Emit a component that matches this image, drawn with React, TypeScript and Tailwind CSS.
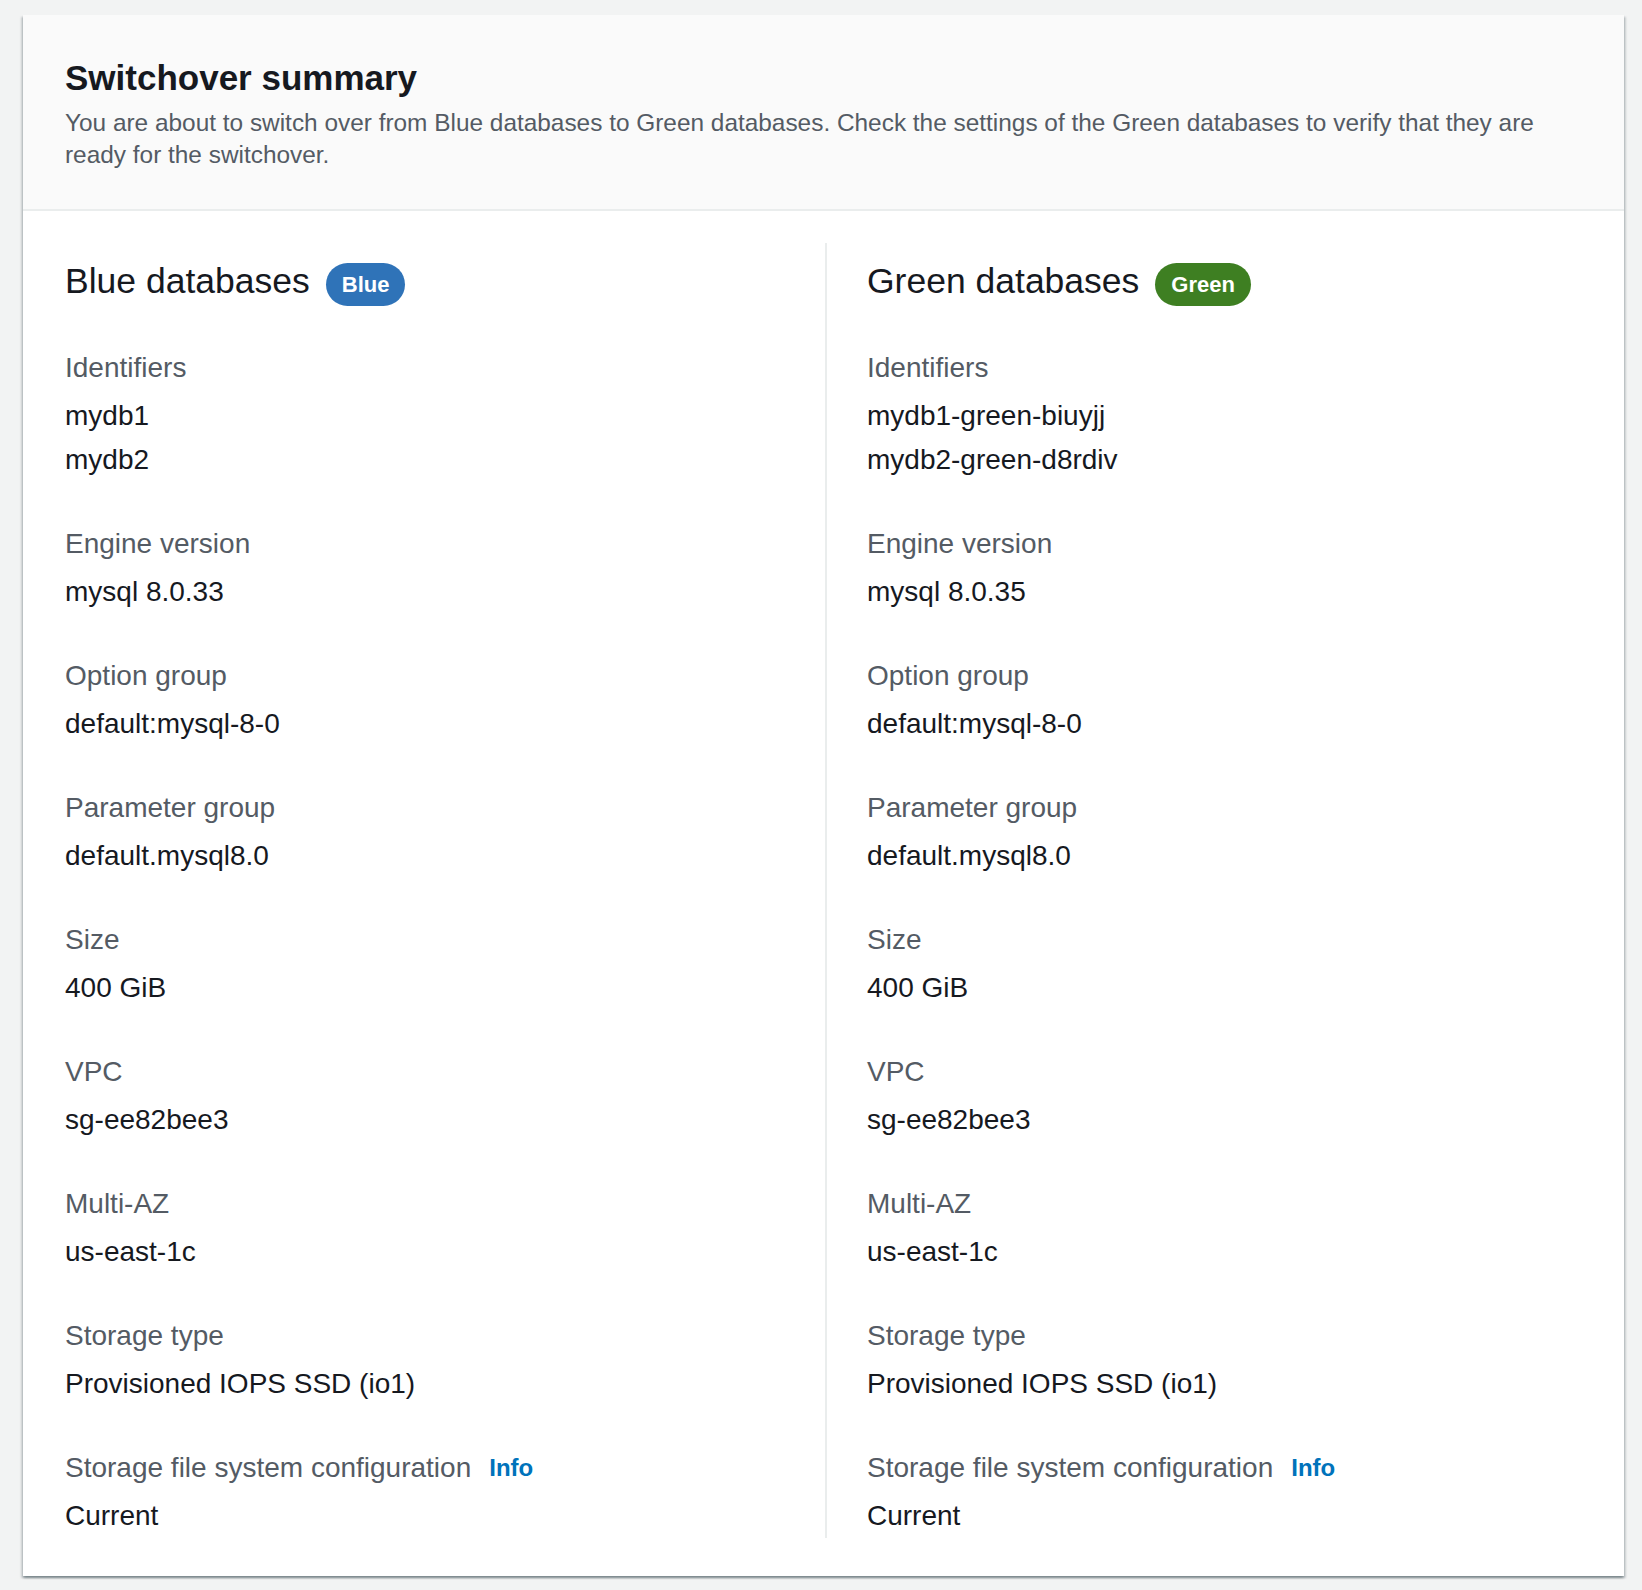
import React from "react";

type Field = { label: string; values: string[]; info?: boolean };

const blueFields: Field[] = [
  { label: "Identifiers", values: ["mydb1", "mydb2"] },
  { label: "Engine version", values: ["mysql 8.0.33"] },
  { label: "Option group", values: ["default:mysql-8-0"] },
  { label: "Parameter group", values: ["default.mysql8.0"] },
  { label: "Size", values: ["400 GiB"] },
  { label: "VPC", values: ["sg-ee82bee3"] },
  { label: "Multi-AZ", values: ["us-east-1c"] },
  { label: "Storage type", values: ["Provisioned IOPS SSD (io1)"] },
  { label: "Storage file system configuration", values: ["Current"], info: true },
];

const greenFields: Field[] = [
  { label: "Identifiers", values: ["mydb1-green-biuyjj", "mydb2-green-d8rdiv"] },
  { label: "Engine version", values: ["mysql 8.0.35"] },
  { label: "Option group", values: ["default:mysql-8-0"] },
  { label: "Parameter group", values: ["default.mysql8.0"] },
  { label: "Size", values: ["400 GiB"] },
  { label: "VPC", values: ["sg-ee82bee3"] },
  { label: "Multi-AZ", values: ["us-east-1c"] },
  { label: "Storage type", values: ["Provisioned IOPS SSD (io1)"] },
  { label: "Storage file system configuration", values: ["Current"], info: true },
];

function Column({ title, badge, badgeClass, fields }: { title: string; badge: string; badgeClass: string; fields: Field[] }) {
  return (
    <div className="flex flex-col pt-[16px]">
      <div className="flex items-start">
        <h3 className="text-[35.5px] leading-[44px] text-[#16191f]">{title}</h3>
        <span className={`ml-[16px] mt-[4px] h-[43px] px-[16px] rounded-full flex items-center text-white text-[22px] font-bold ${badgeClass}`}>
          {badge}
        </span>
      </div>
      <div className="flex flex-col gap-[40px] mt-[40px]">
        {fields.map((f) => (
          <div key={f.label} className="flex flex-col">
            <div className="flex items-center text-[28px] leading-[44px] text-[#545b64] mb-[4px]">
              <span>{f.label}</span>
              {f.info && <a className="ml-[18px] text-[24px] font-bold text-[#0073bb]">Info</a>}
            </div>
            {f.values.map((v) => (
              <div key={v} className="text-[28px] leading-[44px] text-[#16191f]">{v}</div>
            ))}
          </div>
        ))}
      </div>
    </div>
  );
}

export default function App() {
  return (
    <div className="min-h-[1590px] bg-[#f2f3f3] pt-[15px] pl-[23px] pr-[18px] pb-[14px]" style={{ fontFamily: '"Liberation Sans", Arial, sans-serif' }}>
      <div className="bg-white shadow-[0_2px_2px_0_rgba(0,28,36,0.3),2px_2px_2px_0_rgba(0,28,36,0.15),-2px_2px_2px_0_rgba(0,28,36,0.15)]">
        <div className="bg-[#fafafa] border-b-2 border-[#eaeded] pl-[42px] pr-[44px] pt-[41px] pb-[38px]">
          <h2 className="text-[35px] leading-[44px] font-bold text-[#16191f]">Switchover summary</h2>
          <p className="mt-[7px] text-[24.4px] leading-[32px] text-[#545b64]">
            You are about to switch over from Blue databases to Green databases. Check the settings of the Green databases to verify that they are ready for the switchover.
          </p>
        </div>
        <div className="pl-[42px] pr-[44px] pt-[32px] pb-[38px]">
          <div className="grid grid-cols-[760px_1fr]">
            <div className="pr-[40px]">
              <Column title="Blue databases" badge="Blue" badgeClass="bg-[#2f73b8]" fields={blueFields} />
            </div>
            <div className="border-l-2 border-[#eaeded] pl-[40px]">
              <Column title="Green databases" badge="Green" badgeClass="bg-[#3e7f22]" fields={greenFields} />
            </div>
          </div>
        </div>
      </div>
    </div>
  );
}
